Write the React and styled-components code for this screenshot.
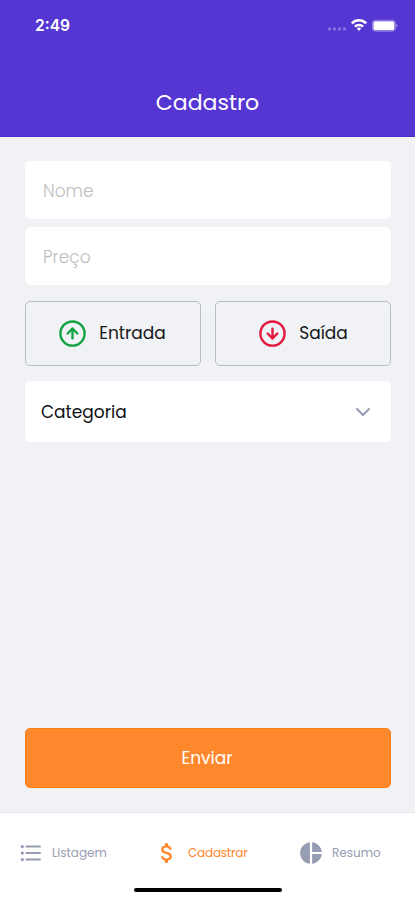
import React, { useState } from 'react';
import styled, { createGlobalStyle } from 'styled-components';
import { FiArrowUpCircle, FiArrowDownCircle, FiChevronDown } from 'react-icons/fi';
import { MdFormatListBulleted, MdAttachMoney, MdPieChart } from 'react-icons/md';

const GlobalStyle = createGlobalStyle`
  * {
    box-sizing: border-box;
    margin: 0;
    padding: 0;
  }

  body, input, button {
    font-family: 'Poppins', 'Inter', sans-serif;
  }
`;

const Container = styled.div`
  width: 100%;
  height: 900px;
  display: flex;
  flex-direction: column;
  overflow: hidden;
  background-color: #f0f2f5;
`;

const Header = styled.header`
  height: 137px;
  display: flex;
  flex-direction: column;
  justify-content: space-between;
  background-color: #5636d3;
  border-bottom: 1px solid #4a2cc4;
  color: #ffffff;
`;

const StatusBar = styled.div`
  display: flex;
  justify-content: space-between;
  align-items: center;
  height: 50px;
  padding: 0 17px 0 35px;
`;

const Time = styled.span`
  font-family: 'Inter', sans-serif;
  font-size: 15.6px;
  font-weight: 600;
`;

const StatusIcons = styled.div`
  display: flex;
  align-items: center;
`;

const Title = styled.h1`
  height: 66px;
  line-height: 66px;
  text-align: center;
  font-size: 22px;
  font-weight: 400;
`;

const Form = styled.form`
  flex: 1;
  display: flex;
  flex-direction: column;
  justify-content: space-between;
  padding: 24px 24px 24px 25px;
`;

const Fields = styled.div`
  display: flex;
  flex-direction: column;
`;

const Input = styled.input`
  width: 100%;
  height: 58px;
  margin-bottom: 8px;
  padding: 2px 18px 0;
  border: none;
  border-radius: 5px;
  background-color: #ffffff;
  color: #363f5f;
  font-size: 17px;
  font-weight: 300;

  &::placeholder {
    color: #bdbdc0;
    opacity: 1;
  }
`;

const TransactionTypes = styled.div`
  display: grid;
  grid-template-columns: 176px 176px;
  justify-content: space-between;
  margin: 8px 0 15px;
`;

const TypeButton = styled.button`
  display: flex;
  align-items: center;
  justify-content: center;
  gap: 12px;
  height: 65px;
  padding: 0 ${(props) => props.$right || '0'} 1px 0;
  border: 1px solid #b9bbc6;
  border-radius: 5px;
  background-color: transparent;
  color: #15161a;
  font-size: 17px;
  font-weight: 400;

  svg {
    color: ${(props) => props.$color};
  }
`;

const CategorySelect = styled.button`
  display: flex;
  align-items: center;
  justify-content: space-between;
  height: 61px;
  padding: 0 16px;
  border: none;
  border-radius: 5px;
  background-color: #ffffff;
  color: #101114;
  font-size: 17px;
  font-weight: 400;

  svg {
    color: #969cb2;
  }
`;

const SubmitButton = styled.button`
  height: 60px;
  padding-right: 2px;
  border: 1px solid #fb7d16;
  border-radius: 5px;
  background-color: #ff872c;
  color: #ffffff;
  font-size: 17px;
  font-weight: 400;
`;

const Footer = styled.footer`
  height: 88px;
  border-top: 1px solid #e4e6ea;
  background-color: #ffffff;
`;

const Tabs = styled.nav`
  display: grid;
  grid-template-columns: 137px 141px 137px;
  height: 80px;
  padding-left: 1px;
`;

const Tab = styled.a`
  display: flex;
  align-items: center;
  padding-left: ${(props) => props.$left};
  gap: 8px;
  color: ${(props) => (props.$active ? '#ff872c' : '#969cb2')};
  font-size: 12px;
  font-weight: 400;
  letter-spacing: ${(props) => (props.$active ? '-0.2px' : '0')};
`;

const HomeIndicator = styled.div`
  width: 148px;
  height: 4px;
  margin: -5px auto 0;
  border-radius: 2px;
  background-color: #000000;
`;

const App = () => {
  const [name, setName] = useState('');
  const [price, setPrice] = useState('');

  const handleSubmit = (e) => {
    e.preventDefault();
  };

  return (
    <>
      <GlobalStyle />
      <Container>
        <Header>
          <StatusBar>
            <Time>2:49</Time>
            <StatusIcons>
              <svg width="72" height="20" viewBox="0 0 72 20" fill="#fff">
                <g opacity="0.3">
                  <rect x="2" y="12.5" width="3" height="3" rx="0.8" />
                  <rect x="7" y="12.5" width="3" height="3" rx="0.8" />
                  <rect x="12" y="12.5" width="3" height="3" rx="0.8" />
                  <rect x="17" y="12.5" width="3" height="3" rx="0.8" />
                </g>
                {/* wifi */}
                <g fill="none" stroke="#fff" strokeWidth="2.5">
                  <path d="M25.8 8.3a10.2 10.2 0 0 1 14.4 0" />
                  <path d="M28.9 11.6a5.8 5.8 0 0 1 8.2 0" />
                </g>
                <path d="M33 16l-2.2-2.4a3.2 3.2 0 0 1 4.4 0z" />
                {/* battery */}
                <rect x="46.4" y="5.2" width="23" height="11" rx="3" fill="none" stroke="#fff" strokeOpacity="0.4" />
                <rect x="47.4" y="6.2" width="21" height="9" rx="1.8" />
                <path d="M70.4 8.8c1.5.6 1.5 3.2 0 3.8z" opacity="0.5" />
              </svg>
            </StatusIcons>
          </StatusBar>
          <Title>Cadastro</Title>
        </Header>

        <Form onSubmit={handleSubmit}>
          <Fields>
            <Input placeholder="Nome" value={name} onChange={(e) => setName(e.target.value)} />
            <Input placeholder="Preço" value={price} onChange={(e) => setPrice(e.target.value)} />
            <TransactionTypes>
              <TypeButton type="button" $color="#12a443" $right="2px">
                <FiArrowUpCircle size={29} />
                Entrada
              </TypeButton>
              <TypeButton type="button" $color="#e3193f">
                <FiArrowDownCircle size={29} />
                Saída
              </TypeButton>
            </TransactionTypes>
            <CategorySelect type="button">
              Categoria
              <FiChevronDown size={24} />
            </CategorySelect>
          </Fields>
          <SubmitButton type="submit">Enviar</SubmitButton>
        </Form>

        <Footer>
          <Tabs>
            <Tab $left="17px">
              <MdFormatListBulleted size={26} />
              Listagem
            </Tab>
            <Tab $active $left="16px">
              <MdAttachMoney size={26} />
              Cadastrar
            </Tab>
            <Tab $left="19px">
              <MdPieChart size={26} />
              Resumo
            </Tab>
          </Tabs>
          <HomeIndicator />
        </Footer>
      </Container>
    </>
  );
};

export default App;
